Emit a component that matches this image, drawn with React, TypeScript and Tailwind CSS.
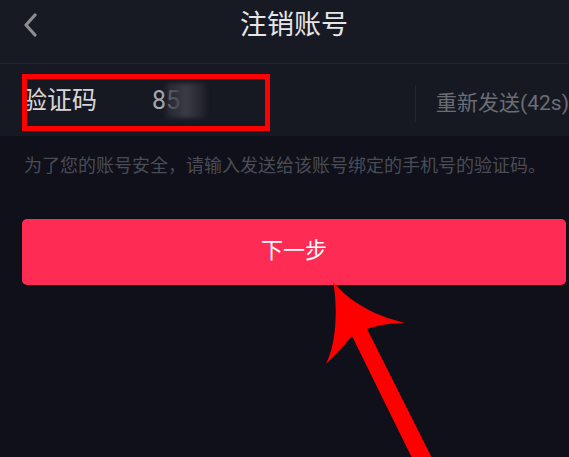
import React from "react";

const FONT = "font-['Roboto','Noto_Sans_CJK_SC',sans-serif]";

export default function App() {
  return (
    <div className={`relative w-full h-[457px] overflow-hidden bg-[#0f1019] ${FONT}`}>
      {/* Header */}
      <div className="relative h-[64px] bg-[#171923] border-b border-[#23252f] flex items-center justify-center pl-[22px] pr-[3px]">
        <svg
          className="absolute left-[22px] top-[13px]"
          width="16"
          height="24"
          viewBox="0 0 16 24"
          fill="none"
        >
          <path d="M13 2 L4 12 L13 22" stroke="#8c8d93" strokeWidth="3.2" strokeLinecap="round" strokeLinejoin="round" />
        </svg>
        <span className="text-[27px] leading-none text-[#e6e6e9] -mt-[12px]">注销账号</span>
      </div>

      {/* Input row */}
      <div className="relative h-[72px] bg-[#171922] flex items-center">
        <span className="pl-[22px] w-[152px] text-[25px] leading-none text-[#d6d6da]">验证码</span>
        <span className="relative text-[25px] leading-none text-[#a8a9af]">
          85
          <span className="absolute left-[14px] -top-[5px] w-[40px] h-[35px] bg-gradient-to-r from-[#2e3039]/60 via-[#3b3d46] to-[#2a2c35]/40 blur-[2px]" />
        </span>
        <div className="ml-auto flex items-center mt-[6px]">
          <div className="w-px h-[37px] bg-[#24262f]" />
          <span className="ml-[20px] text-[21px] leading-none text-[#6b6d76] whitespace-nowrap">
            重新发送(42s)
          </span>
        </div>
      </div>

      {/* Hint */}
      <p className="mt-[18px] px-[24px] text-[18px] leading-[24px] text-[#4a4c55] whitespace-nowrap">
        为了您的账号安全，请输入发送给该账号绑定的手机号的验证码。
      </p>

      {/* Button */}
      <div className="mt-[41px] ml-[22px] mr-[3px] h-[66px] rounded-[5px] bg-[#fe2c55] flex items-center justify-center">
        <span className="text-[22px] leading-none text-white -mt-[2px]">下一步</span>
      </div>

      {/* Red highlight box */}
      <div className="absolute left-[22px] top-[74px] w-[248px] h-[57px] border-[5px] border-[#ff0000]" />

      {/* Red arrow */}
      <svg className="absolute left-0 top-0" width="569" height="457" viewBox="0 0 569 457">
        <path
          d="M333 282
             C 337 300, 338 340, 326 364
             C 334 356, 344 346, 352 336
             L 413 460
             L 433 460
             L 367 329
             C 378 325, 392 323, 405 323
             C 385 318, 355 308, 333 282 Z"
          fill="#ff0000"
        />
      </svg>
    </div>
  );
}
